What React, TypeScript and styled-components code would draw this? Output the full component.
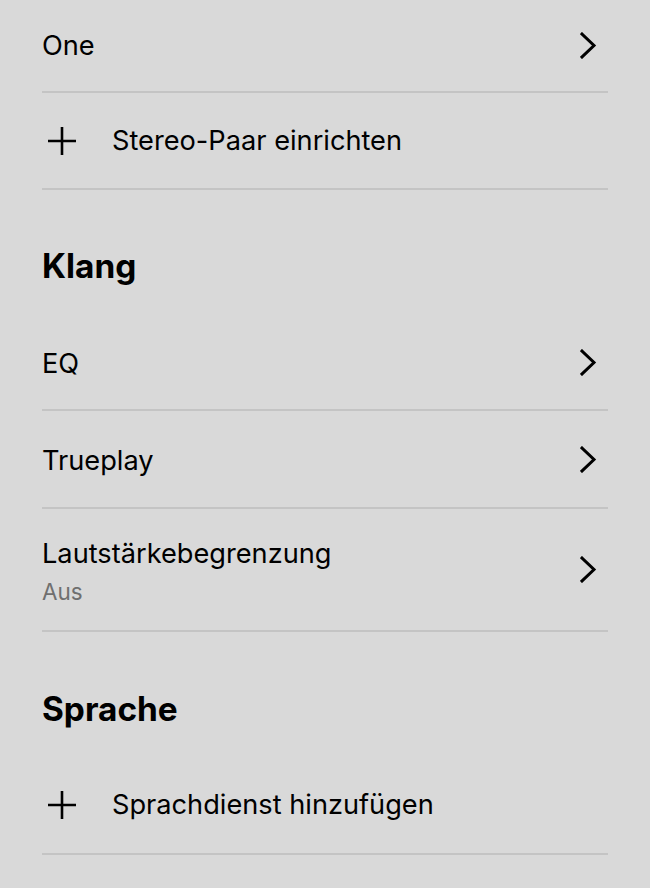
import React from "react";
import styled, { createGlobalStyle } from "styled-components";

const Global = createGlobalStyle`
  html, body {
    margin: 0;
    padding: 0;
    background: #d9d9d9;
  }
  body {
    font-family: Inter, "Noto Sans", "Liberation Sans", sans-serif;
    color: #000;
    -webkit-font-smoothing: antialiased;
  }
`;

const Page = styled.div`
  padding: 0 42px;
  display: flex;
  flex-direction: column;
`;

const Row = styled.div<{ $h: number }>`
  height: ${(p) => p.$h}px;
  display: flex;
  align-items: center;
  border-bottom: 2px solid #c4c4c4;
  box-sizing: border-box;
`;

const Texts = styled.div<{ $top?: number }>`
  flex: 1;
  display: flex;
  flex-direction: column;
  gap: 8px;
  padding-top: ${(p) => p.$top ?? 0}px;
`;

const Title = styled.div`
  font-size: 27.2px;
  line-height: 32px;
`;

const Sub = styled.div`
  font-size: 22.5px;
  line-height: 28px;
  color: #6f6f6f;
`;

const Heading = styled.h2<{ $h: number }>`
  margin: 0;
  height: ${(p) => p.$h}px;
  display: flex;
  align-items: flex-end;
  font-size: 33.4px;
  font-weight: 700;
  line-height: 40px;
  box-sizing: border-box;
`;

const PlusBox = styled.div`
  width: 70px;
  display: flex;
  align-items: center;
  padding-left: 6px;
  box-sizing: border-box;
`;

const ChevronBox = styled.div`
  width: 28px;
  display: flex;
  justify-content: flex-start;
`;

const Chevron = () => (
  <ChevronBox>
    <svg width="17" height="27" viewBox="0 0 17 27" fill="none">
      <path d="M2 2 L14 13.5 L2 25" stroke="#000" strokeWidth="3" strokeLinecap="square" strokeLinejoin="miter" />
    </svg>
  </ChevronBox>
);

const Plus = () => (
  <PlusBox>
    <svg width="28" height="28" viewBox="0 0 28 28">
      <path d="M14 0 V28 M0 14 H28" stroke="#000" strokeWidth="2.6" />
    </svg>
  </PlusBox>
);

const Spacer = styled.div<{ $h: number }>`
  height: ${(p) => p.$h}px;
`;

export default function App() {
  return (
    <>
      <Global />
      <Page>
        <Row $h={93}>
          <Texts>
            <Title>One</Title>
          </Texts>
          <Chevron />
        </Row>
        <Row $h={97}>
          <Plus />
          <Texts>
            <Title>Stereo-Paar einrichten</Title>
          </Texts>
        </Row>
        <Heading $h={96}>Klang</Heading>
        <Spacer $h={30} />
        <Row $h={95}>
          <Texts $top={2}>
            <Title>EQ</Title>
          </Texts>
          <Chevron />
        </Row>
        <Row $h={98}>
          <Texts $top={3}>
            <Title>Trueplay</Title>
          </Texts>
          <Chevron />
        </Row>
        <Row $h={123}>
          <Texts $top={4}>
            <Title>Lautstärkebegrenzung</Title>
            <Sub>Aus</Sub>
          </Texts>
          <Chevron />
        </Row>
        <Heading $h={97}>Sprache</Heading>
        <Spacer $h={28} />
        <Row $h={98}>
          <Plus />
          <Texts>
            <Title>Sprachdienst hinzufügen</Title>
          </Texts>
        </Row>
      </Page>
    </>
  );
}
